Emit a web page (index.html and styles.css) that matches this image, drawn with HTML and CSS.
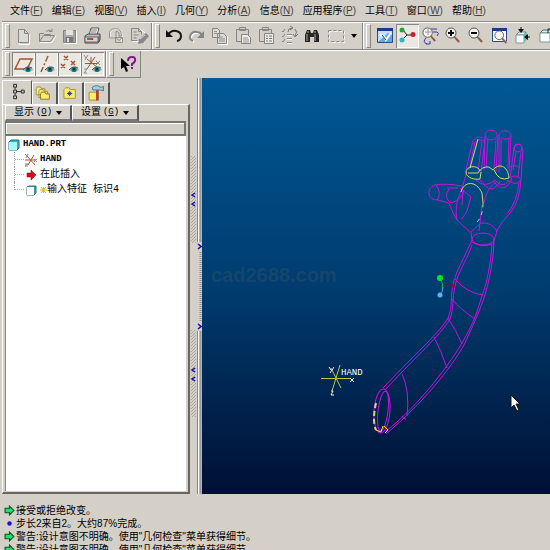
FILE: index.html
```html
<!DOCTYPE html>
<html lang="zh-CN">
<head>
<meta charset="utf-8">
<title>HAND.PRT</title>
<link rel="stylesheet" href="styles.css">
</head>
<body>
<nav class="menubar">
  <a href="#">文件<span>(<u>F</u>)</span></a>
  <a href="#">编辑<span>(<u>E</u>)</span></a>
  <a href="#">视图<span>(<u>V</u>)</span></a>
  <a href="#">插入<span>(<u>I</u>)</span></a>
  <a href="#">几何<span>(<u>Y</u>)</span></a>
  <a href="#">分析<span>(<u>A</u>)</span></a>
  <a href="#">信息<span>(<u>N</u>)</span></a>
  <a href="#">应用程序<span>(<u>P</u>)</span></a>
  <a href="#">工具<span>(<u>T</u>)</span></a>
  <a href="#">窗口<span>(<u>W</u>)</span></a>
  <a href="#">帮助<span>(<u>H</u>)</span></a>
</nav>

<svg class="defs" width="0" height="0" aria-hidden="true">
  <defs>
    <symbol id="eye" viewBox="0 0 10 7">
      <path d="M0 4Q4-1 9 2L10 4Q5 8 0 4Z" fill="#9db7b3"/>
      <path d="M0 4Q4-1 9 2" fill="none" stroke="#555"/>
      <circle cx="5" cy="3.500" r="2.500" fill="#087070"/>
      <circle cx="5" cy="3" r="1" fill="#023"/>
    </symbol>
    <symbol id="lens" viewBox="0 0 16 16">
      <path d="M9 9L14 15" stroke="#8a5a48" stroke-width="2"/>
      <path d="M10 9L15 14" stroke="#d7a890" stroke-width="1"/>
      <circle cx="6" cy="6" r="5" fill="#f4f3ef" stroke="#555"/>
    </symbol>
  </defs>
</svg>

<div class="toolbar">
  <div class="group">
    <button class="tool" aria-label="新建"><svg viewBox="0 0 23 24"><path d="M7.500 6.500h6l4 4v10h-10z" fill="none" stroke="#fff"/><path d="M6.500 5.500h6l4 4v9h-10zM12.500 5.500v4h4" fill="#dcdad4" stroke="#858585"/></svg></button>
    <button class="tool" aria-label="打开"><svg viewBox="0 0 23 24"><path d="M5 18.500h12l4-7" fill="none" stroke="#fff"/><path d="M4.500 17.500v-8h4l1 1h6v2M4.500 17.500l4-6h11l-4 6zM11 7.500q3-3 6 0v-3m0 3h-3" fill="none" stroke="#858585"/></svg></button>
    <button class="tool" aria-label="保存"><svg viewBox="0 0 23 24"><path d="M6 19.500h12.500V7" fill="none" stroke="#fff"/><path d="M5.500 6.500h12v12h-12z" fill="#aaa" stroke="#808080"/><path d="M8 6h7v5H8z" fill="#e4e2dc"/><path d="M7.500 13h8v5h-8z" fill="#777"/><path d="M9 14h2v4H9z" fill="#ddd"/></svg></button>
    <button class="tool" aria-label="打印"><svg viewBox="0 0 23 24"><path d="M8 11l2-7h8l-2 7z" fill="#fff" stroke="#555"/><path d="M10 6h6M9.500 8h6" stroke="#777"/><path d="M4 12l3-2h12v6l-2 3H4z" fill="#bbb" stroke="#444"/><path d="M4 13h13v5H4z" fill="#d8d8d8" stroke="#666"/><path d="M6 15h3" stroke="#12a060" stroke-width="2"/><path d="M9 15h3" stroke="#e03030" stroke-width="2"/><path d="M18 12v6" stroke="#555"/></svg></button>
    <button class="tool" aria-label="发送"><svg viewBox="0 0 23 24"><path d="M6 15V9q2-5 8-4 4 1 4 7v6" fill="none" stroke="#fff"/><path d="M5.500 14V8q2-4 6-3.500 6 0 6 7.500H15V9q-1-2-3-1.500V14zM11.500 13.500h7v5h-7zM11.500 13.500l3.500 3 3.500-3" fill="none" stroke="#909090"/></svg></button>
    <button class="tool" aria-label="草绘"><svg viewBox="0 0 23 24"><path d="M5 17.500h9M13 5l5 4" stroke="#fff"/><path d="M4.500 16.500v-12h7l3 3v3M11.500 4.500v3h3M4.500 16.500h6M6.500 8h3M6.500 11h5M6.500 14h3" fill="none" stroke="#858585"/><path d="M11 20l1-5 7-6 3 3-6 7z" fill="#888"/><path d="M13 15l5-4M16 5l3 2" stroke="#ddd"/></svg></button>
  </div>
  <div class="group wide">
    <button class="tool" aria-label="撤消"><svg viewBox="0 0 23 24"><path d="M6 11Q9 6 14 7q5 1 5 5 0 4-4 5" fill="none" stroke="#151515" stroke-width="2"/><path d="M4 6v7h7z" fill="#111"/></svg></button>
    <button class="tool" aria-label="重做"><svg viewBox="0 0 23 24"><path d="M9 18q-4-2-3-5 2-5 7-4 3 0 5 3" fill="none" stroke="#fff" stroke-width="2"/><path d="M8 17q-4-2-3-5 2-5 7-4 3 0 5 3" fill="none" stroke="#858585" stroke-width="2"/><path d="M19 7v7h-7z" fill="#858585"/></svg></button>
    <button class="tool" aria-label="复制"><svg viewBox="0 0 23 24"><path d="M4.500 4.500h5l2 2v7h-7zM9.500 9.500h6l3 3v7h-9z" fill="#dcdad4" stroke="#858585"/><path d="M6 7.500h3M6 9.500h4M11 13h4M11 15h6M11 17h6" fill="none" stroke="#909090"/><path d="M19.500 12v8.500H10" fill="none" stroke="#fff"/></svg></button>
    <button class="tool" aria-label="粘贴"><svg viewBox="0 0 23 24"><path d="M5.500 5.500h12v12h-12zM8.500 3.500h6v3h-6z" fill="#d4d0c8" stroke="#858585"/><path d="M10.500 10.500h6l3 3v6h-9z" fill="#eceae4" stroke="#858585"/><path d="M12 14h5M12 16h6M12 18h6" stroke="#999"/></svg></button>
    <button class="tool" aria-label="选择性粘贴"><svg viewBox="0 0 23 24"><path d="M5.500 5.500h12v12h-12zM8.500 3.500h6v3h-6z" fill="#d4d0c8" stroke="#858585"/><path d="M10.500 9.500h9v10h-9z" fill="#eceae4" stroke="#858585"/><path d="M12 12h2m1 0h3M12 14.500h2m1 0h3M12 17h2m1 0h3" stroke="#777"/></svg></button>
    <button class="tool" aria-label="再生"><svg viewBox="0 0 23 24"><path d="M5 7l1 1 2-3M5 12l1 1 2-3M5 17l1 1 2-3M10 10.500h5M10 14.500h5M10 18.500h5" fill="none" stroke="#858585"/><path d="M11 8q0-4 4-4m-2-2l3 2-3 2M18 5q3 3 0 7m-2-2l2 3 3-3" fill="none" stroke="#777"/><path d="M10 11.500h5M10 15.500h5M10 19.500h5" stroke="#fff"/></svg></button>
    <button class="tool" aria-label="查找"><svg viewBox="0 0 23 24"><path d="M5 11l2-5h3l1 3h2l1-3h3l2 5v7h-5v-5h-4v5H5z" fill="#252525"/><path d="M7 10v7M15 10v7M8 7v2M15 7v2" stroke="#aaa"/></svg></button>
    <button class="tool" aria-label="选取框"><svg viewBox="0 0 23 24"><path d="M6.500 7.500h15v11h-15z" fill="none" stroke="#fff" stroke-dasharray="3 2"/><path d="M5.500 6.500h15v11h-15z" fill="none" stroke="#858585" stroke-dasharray="3 2"/></svg></button>
    <button class="tool narrow" aria-label="更多"><svg viewBox="0 0 14 24"><path d="M5 10h6l-3 4z" fill="#000"/></svg></button>
  </div>
  <div class="group last">
    <button class="tool" aria-label="重画"><svg viewBox="0 0 23 24"><path d="M4.500 4.500h15v14h-15z" fill="#bfe0f8" stroke="#2a4a94"/><path d="M4 4h16v3H4z" fill="#183a8c"/><path d="M5 18l10-9 4 2v7z" fill="#5fa8e4"/><path d="M7 11q5 1 6 5l5-7" fill="none" stroke="#fff" stroke-width="2"/><path d="M9 11l4 5" stroke="#333"/></svg></button>
    <button class="tool pressed" aria-label="旋转中心"><svg viewBox="0 0 23 24"><path d="M7 6l4 5-5 5M11 11h6" fill="none" stroke="#222"/><circle cx="6" cy="6" r="2.500" fill="#1cab38"/><circle cx="6" cy="16" r="2.500" fill="#2cb6c4"/><circle cx="17" cy="10.500" r="2.500" fill="#d01e28"/></svg></button>
    <button class="tool" aria-label="定向模式"><svg viewBox="0 0 23 24"><use href="#lens" x="3" y="3" width="15" height="15"/><path d="M6 8h6M9 5v6" stroke="#999"/><path d="M12 5h6M14 8h4q3 1 0 4M7 14q-4 4 1 6M7 20h4v-3" fill="none" stroke="#3038a8" stroke-width="1"/></svg></button>
    <button class="tool" aria-label="放大"><svg viewBox="0 0 23 24"><use href="#lens" x="3" y="3" width="16" height="16"/><path d="M6 9h6M9 6v6" stroke="#000" stroke-width="2"/></svg></button>
    <button class="tool" aria-label="缩小"><svg viewBox="0 0 23 24"><use href="#lens" x="3" y="3" width="16" height="16"/><path d="M6 9h6" stroke="#000" stroke-width="2"/></svg></button>
    <button class="tool" aria-label="重新调整"><svg viewBox="0 0 23 24"><path d="M4.500 4.500h14v13h-14z" fill="#fff" stroke="#2a4a94"/><path d="M4 4h15v3H4z" fill="#183a8c"/><use href="#lens" x="6" y="6" width="14" height="14"/></svg></button>
    <button class="tool" aria-label="重定向"><svg viewBox="0 0 23 24"><path d="M5 11l3-3h7l-2 3z" fill="#e8ffff" stroke="#688"/><path d="M5 11h8v8H5z" fill="#fff" stroke="#799"/><path d="M13 11l3-3v7l-3 4z" fill="#63bdb8"/><path d="M10 3v4M15 13h4" stroke="#111"/><path d="M7 5h6l-3 4zM17 10v6l-4-3z" fill="#111"/></svg></button>
    <button class="tool" aria-label="视图列表"><svg viewBox="0 0 23 24"><path d="M6 9l3-3h9v3z" fill="#cff5f3" stroke="#577"/><path d="M6 9h10v9H6z" fill="#fff" stroke="#799"/><path d="M14 9V5h4" fill="none" stroke="#222"/></svg></button>
  </div>
</div>

<div class="toolbar second">
  <div class="group">
    <button class="tool pressed" aria-label="平面显示"><svg viewBox="0 0 23 24"><path d="M8 7h12l-5 10H3z" fill="none" stroke="#a4552e" stroke-width="1.500"/><use href="#eye" x="11" y="14" width="10" height="7"/></svg></button>
    <button class="tool pressed" aria-label="轴显示"><svg viewBox="0 0 23 24"><path d="M13 4L6 20" stroke="#a4552e" stroke-width="1.500" stroke-dasharray="6 2 2 2"/><use href="#eye" x="10" y="14" width="10" height="7"/></svg></button>
    <button class="tool pressed" aria-label="点显示"><svg viewBox="0 0 23 24"><path d="M6 4l4 4m0-4L6 8M13 9l4 4m0-4l-4 4M3 12l4 4m0-4l-4 4" stroke="#a4552e" stroke-width="1.500"/><use href="#eye" x="11" y="14" width="10" height="7"/></svg></button>
    <button class="tool pressed" aria-label="坐标系显示"><svg viewBox="0 0 23 24"><path d="M6 7l11 9M14 5L6 17M4 11.500h12M10 5v6" stroke="#a4552e" stroke-width="1"/><path d="M3 3l2 3m2-3L4 8M15 9l4 4m0-4l-4 4M3 17h3l-3 4h3" fill="none" stroke="#8a8a8a"/><use href="#eye" x="11" y="14" width="10" height="7"/></svg></button>
  </div>
  <div class="group">
    <button class="tool" aria-label="上下文帮助"><svg viewBox="0 0 23 24"><path d="M5 6v11l3-2 2 5 2-1-2-5h4z" fill="#000"/><path d="M12 9q0-4 4-4t3 4q-1 2-3 3v2M15 16h2" fill="none" stroke="#84158c" stroke-width="2"/></svg></button>
  </div>
</div>

<main class="workspace">
  <aside class="navigator">
    <div class="tabs">
      <button class="tab active" aria-label="模型树"><svg viewBox="0 0 26 24"><path d="M9.500 3.500h3v3h-3zM9.500 9.500h3v3h-3zM9.500 15.500h3v3h-3zM17.500 9.500h3v3h-3zM11 7v2M11 13v2M13 11h4" fill="none" stroke="#222"/></svg></button>
      <button class="tab" aria-label="文件夹浏览器"><svg viewBox="0 0 26 24"><path d="M3.500 6.500l1-2h4l1 2h4v7h-10zM6.500 9.500l1-2h4l1 2h4v7h-10z" fill="#f7e990" stroke="#9a8a30"/><path d="M8.500 12.500l1-2h4l1 2h4v6h-10z" fill="#ffed67" stroke="#806f18"/></svg></button>
      <button class="tab" aria-label="收藏夹"><svg viewBox="0 0 26 24"><path d="M5.500 7.500l2-2h4l1 2h6v10h-13z" fill="#fff06c" stroke="#9a8a30"/><path d="M12 9v6M9 12h6M10 10l4 4m0-4l-4 4" stroke="#222d98"/></svg></button>
      <button class="tab" aria-label="连接"><svg viewBox="0 0 26 24"><path d="M4.500 10.500h10v9h-10z" fill="#ffed67" stroke="#9a8a30"/><path d="M14 7v13" stroke="#b33e28" stroke-width="3"/><path d="M8 5q5-4 10 0l3-1v5l-3-1H9z" fill="#9ed0e2" stroke="#477080"/></svg></button>
    </div>
    <div class="pane">
      <div class="choices">
        <button class="choice">显示<span>(<u>O</u>)</span><i class="caret"></i></button>
        <button class="choice">设置<span>(<u>G</u>)</span><i class="caret"></i></button>
      </div>
      <div class="column-head"></div>
      <ul class="tree">
        <li><svg class="root-icon" viewBox="0 0 12 12"><path d="M1 3l2-2h8v8l-2 2H1z" fill="#2bb4bf" stroke="#287078"/><path d="M1 3h8v8H1z" fill="#a6f8fb"/></svg><span>HAND.PRT</span></li>
        <li class="child"><svg class="node-icon" viewBox="0 0 14 14"><path d="M3 3l8 9M10 2L4 12M1 7h11" stroke="#a4552e"/><path d="M1 1l2 2m1-2L2 5M10 6l3 3m0-3l-3 3M1 11h3l-3 2h3" fill="none" stroke="#888"/></svg><span>HAND</span></li>
        <li class="child"><svg class="node-icon" viewBox="0 0 14 14"><path d="M3 5h4V2l5 5-5 5V9H3z" fill="#d80c18" stroke="#80000a" stroke-width=".5"/></svg><span>在此插入</span></li>
        <li class="child end"><svg class="node-icon" viewBox="0 0 14 14"><path d="M3 4l2-1h7v7l-2 2H3z" fill="#369fa7" stroke="#347078"/><path d="M3 4h7v8H3z" fill="#fff"/></svg><svg class="mark" viewBox="0 0 7 8"><path d="M1 1l5 6M6 1L1 7M0 4h7M3.500 1v6" stroke="#d5bb00"/></svg><span>输入特征 标识4</span></li>
      </ul>
    </div>
  </aside>

  <svg class="sash" viewBox="190 78 12 416" preserveAspectRatio="xMinYMin slice" aria-hidden="true">
    <defs><pattern id="hatch" width="3" height="3" patternUnits="userSpaceOnUse"><path d="M0 3L3 0" stroke="#aaa69e"/></pattern></defs>
    <path d="M191 156h5v87h-5zM191 330h5v87h-5z" fill="url(#hatch)"/>
    <path d="M197.500 78v164M197.500 331v163" stroke="#858585"/>
    <path d="M200.500 78v164M200.500 331v163" stroke="#999" stroke-width="2"/>
    <path d="M198.500 78v164M198.500 331v163" stroke="#fff"/>
    <path d="M200.500 252v70" stroke="#8d8b98" stroke-width="2" stroke-dasharray="1 1"/>
    <path d="M195 193l-3 2 3 2M195 202l-3 2 3 2M198 244l3 2.500-3 2.500M198 324l3 2.500-3 2.500M195 368l-3 2 3 2M195 377l-3 2 3 2" fill="none" stroke="#1810b0" stroke-width="1.500"/>
  </svg>

  <section class="viewport" aria-label="模型视图">
    <svg viewBox="202 78 348 416">
      <text class="watermark" x="211" y="282">cad2688.com</text>
      <g class="wire">
        <path d="M470 244C465 257 456 270 453 285C450 298 453 306 448 318C440 332 422 347 383 388M472 245C467 260 458 272 455 286C452 300 454 308 450 319C439 337 419 353 386 389"/>
        <path d="M492 244C491 260 488 280 482 296C477 311 475 321 462 343C446 370 414 410 386 431M494 242C493 264 489 282 484 298C478 315 472 328 464 345C451 368 423 403 386 434"/>
        <path d="M472 242Q482 248 492 244M455 279Q467 293 483 295M452 299Q460 309 475 319M448 318Q456 330 462 344M434 337Q441 350 447 368M402 374Q410 391 407 416M402 416Q403 419 406 419"/>
        <ellipse cx="382" cy="411" rx="8" ry="22" transform="rotate(4 382 411)"/>
        <ellipse cx="383" cy="411" rx="5" ry="20" transform="rotate(7 383 411)"/>
        <ellipse cx="483" cy="239" rx="11" ry="6"/>
        <path d="M471 232Q478 226 481 223Q492 222 497 231L493 244M471 232L472 240L470 245M479 231L482 205"/>
        <path d="M466 169L473 141Q477 135 483 138M469 170L475 142Q480 138 484 141M485 139L481 173M482 141L478 171"/>
        <ellipse cx="491" cy="135" rx="6" ry="5"/>
        <ellipse cx="505" cy="135" rx="6" ry="4"/>
        <ellipse cx="518" cy="148" rx="4" ry="4"/>
        <path d="M484 170L485 136M486 168L488 139M498 135L496 171M499 172L499 137M501 168L501 139M508 168L509 138M511 136L509 171M494 169L496 139"/>
        <path d="M510 178L514 148Q519 140 523 149L521 180Q520 200 511 212Q502 221 496 232M513 170L516 152M518 177L521 152M519 183Q517 201 508 213"/>
        <path d="M476 180Q485 189 495 180Q502 189 509 181M480 180Q492 197 500 181M493 181Q505 196 512 178M507 180Q517 187 521 180M510 167Q515 164 520 168M510 178Q515 174 520 178M497 181Q486 189 484 203"/>
        <path d="M462 186Q446 183 435 185Q428 188 429 194Q430 200 438 200L449 203Q453 214 457 220L470 232M458 188L447 188M436 185Q442 193 437 200M449 189Q443 197 451 203Q462 200 464 190M460 188L471 197L467 211L462 219M457 220Q454 205 461 191M463 191L462 205M467 172L461 191"/>
      </g>
      <g class="highlight">
        <path d="M478 139L470 168M480 171C478 164 465 166 466 173C467 178 475 180 480 179L481 172M468 173H478Q482 166 489 167L493 170C498 163 508 165 509 178Q499 182 494 170"/>
        <path d="M461 192C464 181 476 180 482 193L483 203"/>
        <path d="M483 203Q483 217 476 223" stroke-dasharray="4 4"/>
        <path d="M376 403Q372 421 376 430" stroke-width="2" stroke-dasharray="5 3"/>
        <path d="M376 430l5 2 2-6M384 426l4 4-3 3" stroke="#ffe34a"/>
      </g>
      <g class="spin">
        <path d="M444 285h10" stroke="#751449"/><circle cx="453" cy="286" r="2" fill="#8c0942"/>
        <path d="M440 279Q444 283 442 289" stroke="#24b548"/><path d="M443 287Q443 292 440 295" stroke="#55a5de"/>
        <circle cx="440" cy="278" r="3" fill="#05e81e"/><circle cx="440" cy="295" r="2.500" fill="#5cb3ec"/>
      </g>
      <path d="M321 378.500H351M340 365L332 391M331 368L341 388" class="axes"/>
      <text class="label" x="341" y="375">HAND</text>
      <path d="M329 367l2 3m3-3l-4 6M350 378l4 4m0-4l-4 4M331 391h2l-2 4h3" class="letters"/>
      <path d="M511 395v13l3-3 3 6 2-1-3-6h4z" fill="#fff" stroke="#111"/>
    </svg>
  </section>
</main>

<ol class="messages">
  <li><svg viewBox="0 0 10 10"><path d="M1 3h4V1l4 4-4 4V7H1z" fill="#1ee06c" stroke="#075422"/></svg>接受或拒绝改变。</li>
  <li><svg viewBox="0 0 10 10"><circle cx="5" cy="5" r="2" fill="#1414e8"/></svg>步长2来自2。大约87%完成。</li>
  <li><svg viewBox="0 0 10 10"><path d="M1 3h4V1l4 4-4 4V7H1z" fill="#1ee06c" stroke="#075422"/></svg>警告:设计意图不明确。使用"几何检查"菜单获得细节。</li>
  <li><svg viewBox="0 0 10 10"><path d="M1 3h4V1l4 4-4 4V7H1z" fill="#1ee06c" stroke="#075422"/></svg>警告:设计意图不明确。使用"几何检查"菜单获得细节。</li>
</ol>
</body>
</html>
```
FILE: styles.css
```css
* { box-sizing: border-box; }

body {
  margin: 0;
  height: 100vh;
  padding-left: 2px;
  display: flex;
  flex-direction: column;
  overflow: hidden;
  background: #d4d0c8;
  color: #000;
  font: 10px/13px "Liberation Sans", "Noto Sans CJK SC", sans-serif;
}

button {
  font: inherit;
  color: inherit;
  padding: 0;
  border: 0;
  background: none;
}

svg { display: block; flex: none; }
.defs { position: absolute; }

.menubar {
  display: flex;
  gap: 9px;
  height: 22px;
  flex: none;
  padding: 4px 8px;
  white-space: nowrap;
  border-bottom: 1px solid #8b8984;
}
.menubar a { color: #000; text-decoration: none; }
.menubar span { color: #444; }

.toolbar {
  display: flex;
  flex: none;
  height: 28px;
  border-top: 1px solid #fff;
  border-bottom: 1px solid #858585;
  overflow: hidden;
}
.toolbar.second { border-bottom: 0; }

.group {
  display: flex;
  flex: none;
  align-items: center;
  padding-right: 1px;
  border-right: 1px solid #858585;
  border-left: 1px solid #fff;
}
.group::before {
  content: "";
  width: 3px;
  height: 22px;
  margin: 0 2px;
  border: 1px solid #fff;
  border-right-color: #858585;
  border-bottom-color: #858585;
}
.second .group { border-bottom: 1px solid #858585; }
.wide { padding-right: 2px; }
.last { border-right: 0; }

.tool { flex: none; width: 23px; height: 24px; }
.tool svg { width: 100%; height: 100%; }
.tool.narrow { width: 14px; }
.pressed {
  background: #eae8e3;
  box-shadow: inset 1px 1px #858585, inset -1px -1px #fff;
}

.workspace { flex: 1; min-height: 0; display: flex; }

.navigator {
  flex: 0 0 188px;
  display: flex;
  flex-direction: column;
  padding-top: 2px;
}
.tabs { display: flex; height: 24px; flex: none; align-items: flex-end; }
.tab {
  width: 26px;
  height: 22px;
  border-top: 1px solid #fff;
  border-left: 1px solid #fff;
  border-right: 2px solid #555;
}
.tab.active { width: 30px; height: 24px; border-right-width: 1px; }
.tab svg { width: 100%; height: 100%; }

.pane {
  flex: 1;
  display: flex;
  flex-direction: column;
  min-height: 0;
  padding: 0 2px 1px 2px;
  border-top: 1px solid #fff;
  border-left: 1px solid #fff;
  border-right: 2px solid #68665f;
  border-bottom: 2px solid #68665f;
}
.choices { display: flex; height: 16px; flex: none; }
.choice {
  width: 67px;
  display: flex;
  align-items: center;
  justify-content: center;
  gap: 2px;
  font-family: "Liberation Mono", "Noto Sans CJK SC", monospace;
  border: 1px solid #fff;
  border-right: 2px solid #555;
  border-bottom: 2px solid #777;
}
.choice span { font-size: 9px; }
.caret {
  margin-left: 2px;
  border: 3px solid transparent;
  border-top: 4px solid #000;
  border-bottom: 0;
}
.column-head {
  height: 15px;
  flex: none;
  border: 2px solid #77756f;
  border-left-width: 1px;
  box-shadow: inset 1px 1px #fff;
}
.tree {
  flex: 1;
  margin: 0;
  padding: 1px 0 0;
  list-style: none;
  background: #fff;
  border-left: 1px solid #858585;
  font-family: "Liberation Mono", "Noto Sans CJK SC", monospace;
}
.tree li { display: flex; align-items: center; height: 15px; white-space: pre; }
.tree li:first-child span, .tree li:nth-child(2) span { font-size: 9px; font-weight: bold; }
.root-icon { width: 12px; height: 12px; margin: 0 3px 0 2px; }
.node-icon { width: 14px; height: 14px; margin-right: 2px; }
.mark { width: 7px; height: 8px; }
.child::before {
  content: "";
  width: 9px;
  height: 15px;
  margin-left: 8px;
  border-left: 1px dotted #999;
  background: linear-gradient(90deg, #aaa 50%, #fff 50%) 0 7px / 2px 1px repeat-x;
}
.child.end::before { height: 8px; align-self: flex-start; }

.sash { width: 12px; height: 100%; }

.viewport {
  flex: 1;
  min-width: 0;
  background: linear-gradient(#005894, #003c70 50%, #001034);
}
.viewport svg { width: 100%; height: 100%; }
.wire { fill: none; stroke: #c414df; stroke-width: 1px; }
.highlight { fill: none; stroke: #c8df68; }
.spin path { fill: none; }
.axes { fill: none; stroke: #b8c832; }
.letters { fill: none; stroke: #eef; }
.label { font: 9px "Liberation Mono", monospace; fill: #fff; }
.watermark { font: bold 20px "Liberation Sans", sans-serif; fill: #15466c; }

.messages {
  flex: none;
  height: 56px;
  margin: 0;
  padding: 10px 0 0 2px;
  overflow: hidden;
  list-style: none;
}
.messages li { display: flex; align-items: center; gap: 1px; height: 13px; white-space: nowrap; }
.messages svg { width: 11px; height: 11px; }
```
